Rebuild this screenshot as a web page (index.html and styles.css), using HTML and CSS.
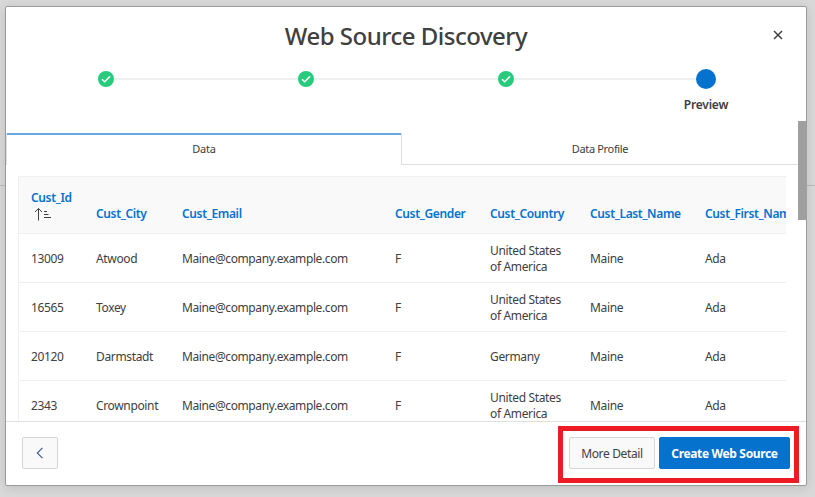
FILE: index.html
```html
<!DOCTYPE html>
<html lang="en">
<head>
<meta charset="utf-8">
<title>Web Source Discovery</title>
<link rel="stylesheet" href="styles.css">
</head>
<body>
<main class="dialog">
  <header class="head">
    <h1 class="title">Web Source Discovery</h1>
    <button class="close" aria-label="Close"><svg width="10" height="10" viewBox="0 0 10 10"><path d="M1 1l8 8M9 1L1 9"/></svg></button>
  </header>
  <ol class="steps">
    <li class="step"><span class="dot"><svg width="16" height="16" viewBox="0 0 16 16"><path d="M4 8.2l2.7 2.6 5.4-5.5"/></svg></span></li>
    <li class="step"><span class="dot"><svg width="16" height="16" viewBox="0 0 16 16"><path d="M4 8.2l2.7 2.6 5.4-5.5"/></svg></span></li>
    <li class="step"><span class="dot"><svg width="16" height="16" viewBox="0 0 16 16"><path d="M4 8.2l2.7 2.6 5.4-5.5"/></svg></span></li>
    <li class="step"><span class="dot current"></span><span class="label">Preview</span></li>
  </ol>
  <section class="body">
    <div class="content">
      <nav class="tabs"><a class="tab active">Data</a><a class="tab profile">Data Profile</a></nav>
      <div class="report">
        <table>
          <colgroup><col class="c-id"><col class="c-city"><col class="c-email"><col class="c-gender"><col class="c-country"><col class="c-last"><col class="c-first"></colgroup>
          <thead><tr><th>Cust_Id<svg class="sort" width="18" height="14" viewBox="0 0 18 14"><path d="M4.500 13.500V1.500M1 5l3.500-3.500L8 5"/><path d="M10 4.500h3M10 7.500h4.500M10 10.500h7"/></svg></th><th>Cust_City</th><th>Cust_Email</th><th>Cust_Gender</th><th>Cust_Country</th><th>Cust_Last_Name</th><th>Cust_First_Name</th></tr></thead>
          <tbody>
            <tr><td>13009</td><td>Atwood</td><td class="email">Maine@company.example.com</td><td>F</td><td>United States of America</td><td>Maine</td><td>Ada</td></tr>
            <tr><td>16565</td><td>Toxey</td><td class="email">Maine@company.example.com</td><td>F</td><td>United States of America</td><td>Maine</td><td>Ada</td></tr>
            <tr><td>20120</td><td>Darmstadt</td><td class="email">Maine@company.example.com</td><td>F</td><td>Germany</td><td>Maine</td><td>Ada</td></tr>
            <tr><td>2343</td><td>Crownpoint</td><td class="email">Maine@company.example.com</td><td>F</td><td>United States of America</td><td>Maine</td><td>Ada</td></tr>
          </tbody>
        </table>
      </div>
    </div>
    <div class="scroll"><div class="thumb"></div></div>
  </section>
  <footer class="foot">
    <button class="btn back" aria-label="Back"><svg width="8" height="12" viewBox="0 0 8 12"><path d="M6.500.8L1.300 6l5.200 5.200"/></svg></button>
    <div class="callout">
      <button class="btn more">More Detail</button>
      <button class="btn primary">Create Web Source</button>
    </div>
  </footer>
</main>
</body>
</html>
```
FILE: styles.css
```css
* { box-sizing: border-box; }
body {
  margin: 0;
  height: 497px;
  padding: 6px 8px 11px 5px;
  overflow: hidden;
  background: linear-gradient(#bbb, #bbb) 0 185px / 100% 1px no-repeat #d9d9d9;
  color: #404040;
  font: 12px/16px "Noto Sans", "Open Sans", sans-serif;
}
svg { display: block; fill: none; stroke: #404040; }
button { font: inherit; color: inherit; padding: 0; }
.dialog {
  display: flex;
  flex-direction: column;
  height: 480px;
  background: #fff;
  border: 1px solid #9b9b9b;
  border-radius: 2px;
  box-shadow: 0 2px 12px rgba(0, 0, 0, .12);
}
.head { display: flex; align-items: center; height: 60px; padding: 0 23px 4px 33px; }
.title { flex: 1; margin: 0; padding-top: 2px; text-align: center; font-size: 24px; line-height: 32px; font-weight: 500; letter-spacing: -.5px; }
.close { border: 0; background: none; }
.close svg { stroke-width: 1.5; }
.steps { display: flex; height: 54px; margin: 0; padding: 0; list-style: none; }
.step { flex: 1; display: flex; flex-direction: column; align-items: center; padding-top: 2px; background: linear-gradient(#efefef, #efefef) 0 11px / 100% 2px no-repeat; }
.step:first-child { background-position: 100px 11px; }
.step:last-child { background-size: 100px 2px; }
.dot { width: 16px; height: 16px; margin: 2px; border-radius: 50%; background: #26cb7c; }
.dot svg { stroke: #fff; stroke-width: 1.5; }
.dot.current { width: 20px; height: 20px; margin: 0; background: #0572ce; }
.label { margin-top: 8px; font-weight: 600; letter-spacing: -.2px; }
.body { flex: 1; display: flex; min-height: 0; margin-right: -1px; }
.content { flex: 1; min-width: 0; overflow: hidden; padding-top: 12px; }
.scroll { width: 9px; border-right: 1px solid #9b9b9b; }
.thumb { width: 9px; height: 99px; background: #9f9f9f; }
.tabs { display: flex; height: 32px; }
.tab { flex: 1; display: flex; align-items: center; justify-content: center; font-size: 11px; border-bottom: 1px solid #dfdfdf; }
.tab.active { flex: 0 0 396px; border: solid #dfdfdf; border-width: 0 1px; box-shadow: inset 0 2px #69a7e1; letter-spacing: -.2px; }
.profile { letter-spacing: -.35px; }
.report { margin: 11px 12px 0; border: solid #efefef; border-width: 1px 0 0 1px; overflow: hidden; }
table { width: 794px; table-layout: fixed; border-collapse: separate; border-spacing: 0; }
.c-id { width: 65px; }
.c-city { width: 86px; }
.c-email { width: 213px; }
.c-gender { width: 95px; }
.c-country { width: 100px; }
.c-last { width: 115px; }
.c-first { width: 120px; }
th, td { padding: 0 12px; text-align: left; border-bottom: 1px solid #efefef; letter-spacing: -.35px; }
th { height: 57px; padding-bottom: 11px; vertical-align: bottom; background: #f9f9f9; color: #0572ce; font-weight: 600; white-space: nowrap; }
td { height: 49px; padding-top: 2px; }
td.email { letter-spacing: -.4px; }
.sort { margin: 1px 0 1px 3px; }
.foot { display: flex; align-items: flex-start; justify-content: space-between; height: 64px; padding: 4px 7px 0 16px; border-top: 1px solid #dfdfdf; }
.btn { display: flex; align-items: center; justify-content: center; height: 32px; border: 1px solid #d5d5d5; border-radius: 2px; background: #f9f9f9; letter-spacing: -.35px; }
.back { width: 36px; margin-top: 11px; }
.back svg { stroke: #3c629a; stroke-width: 1.2; }
.callout { display: flex; gap: 4px; width: 241px; height: 57px; padding: 6px 4px 0 6px; border: 5px solid #ed1c24; }
.more { width: 86px; padding-top: 2px; }
.primary { width: 131px; padding-top: 2px; border-color: #0572ce; background: #0572ce; color: #fff; font-weight: 700; }
```
